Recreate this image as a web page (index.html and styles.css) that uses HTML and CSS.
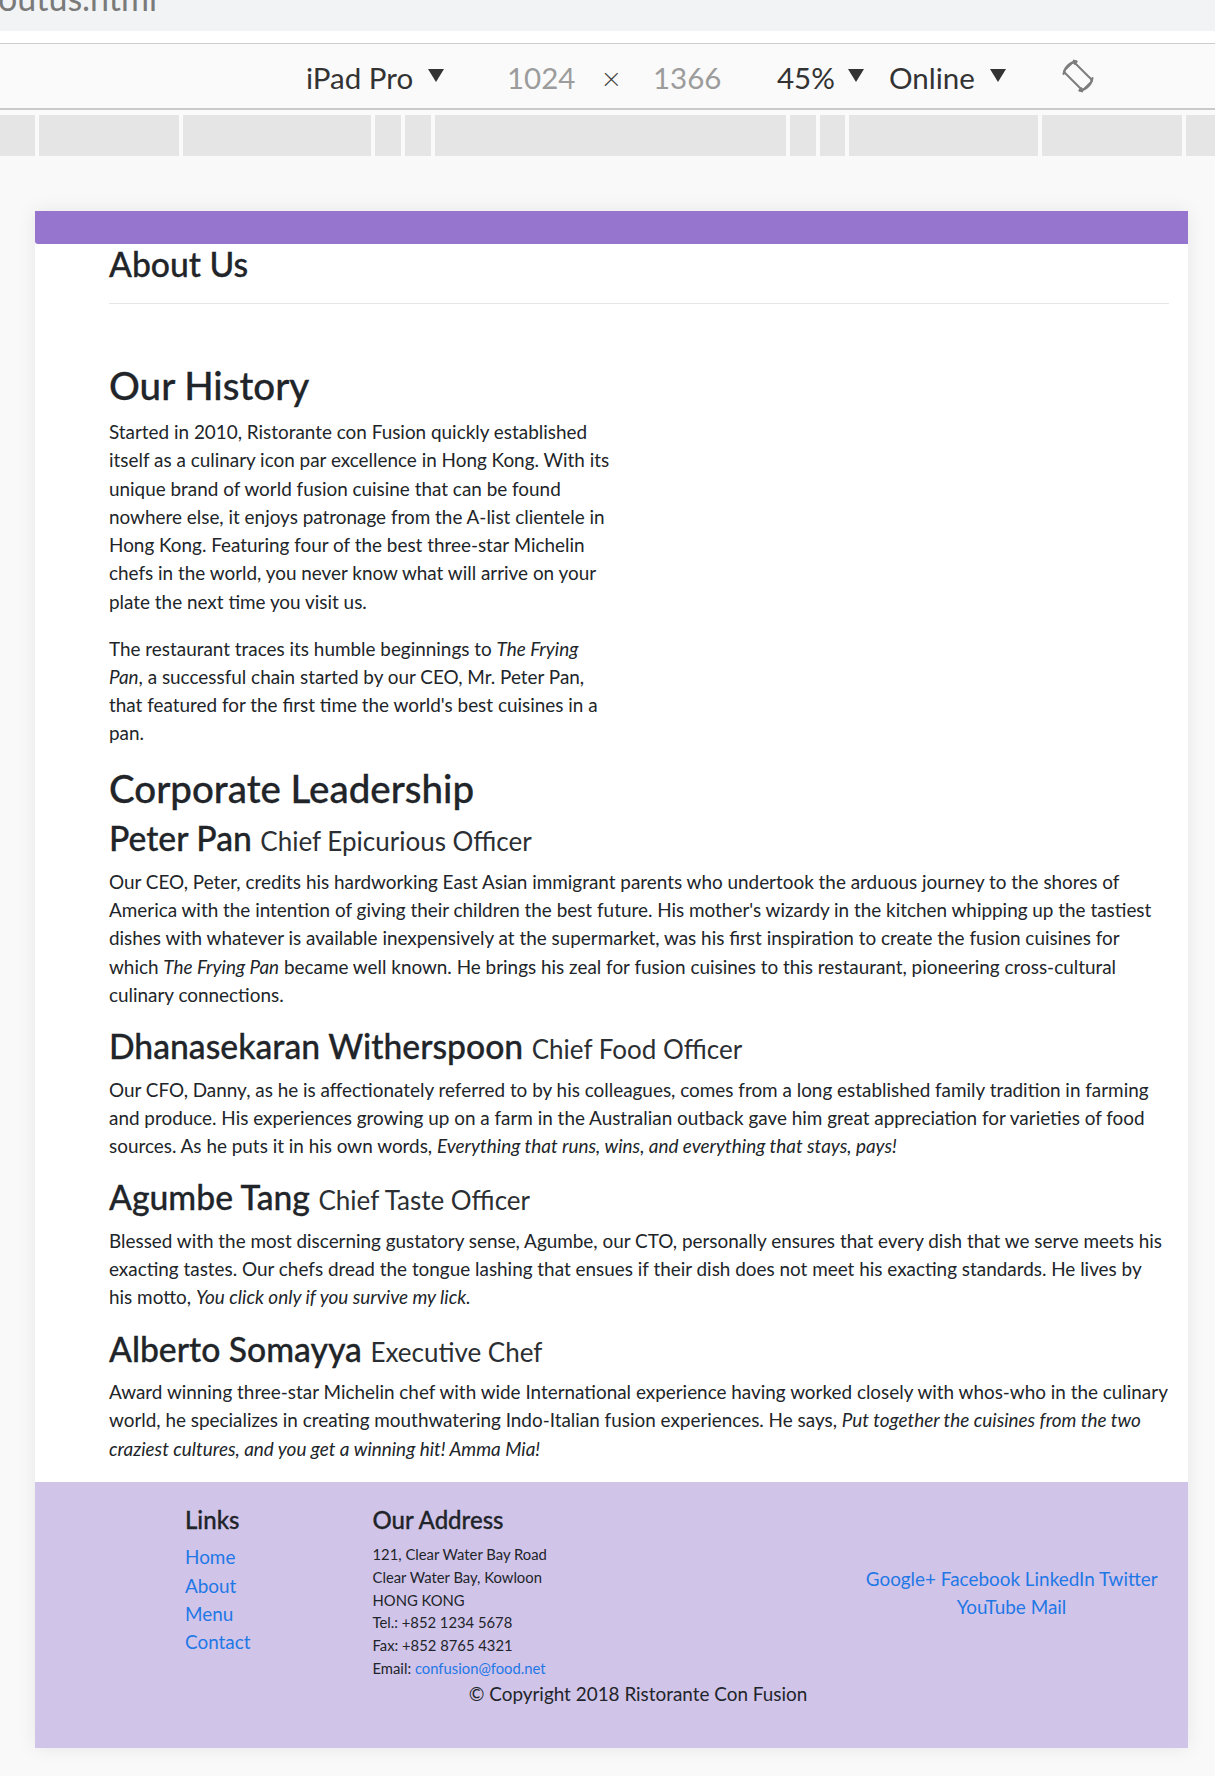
FILE: index.html
```html
<!DOCTYPE html>
<html lang="en">
<head>
<meta charset="utf-8">
<title>About Us</title>
<link rel="stylesheet" href="styles.css">
</head>
<body>
<div class="tabbar"><div class="tab-title">outus.html</div></div>
<div class="tab-gap"></div>
<div class="toolbar">
  <span class="tb-spacer"></span>
  <span class="tb-text">iPad Pro</span>
  <span class="tb-tri"></span>
  <span class="tb-dim">1024</span>
  <span class="tb-x">×</span>
  <span class="tb-dim">1366</span>
  <span class="tb-text">45%</span>
  <span class="tb-tri"></span>
  <span class="tb-text">Online</span>
  <span class="tb-tri"></span>
  <span class="tb-icon">
    <svg width="36" height="34" viewBox="0 0 36 34" fill="none" stroke="#7d7d7d" stroke-width="2" stroke-linecap="round" stroke-linejoin="round">
      <rect x="11" y="3.5" width="14" height="27" rx="2.5" transform="rotate(-45 18 17)"/>
      <path d="M3.5 15 A14.5 14.5 0 0 1 16.5 2.5"/>
      <path d="M13.8 1.6 L16.5 2.5 L14.6 4.8"/>
      <path d="M32.5 19 A14.5 14.5 0 0 1 19.5 31.5"/>
      <path d="M22.2 32.4 L19.5 31.5 L21.4 29.2"/>
    </svg>
  </span>
</div>
<div class="ruler-gap"></div>
<div class="ruler">
  <span></span><span></span><span></span><span></span><span></span><span></span><span></span><span></span><span></span><span></span><span></span>
</div>

<div class="stage">
  <div class="device">
    <div class="device-top"></div>
    <div class="content">
      <h3 class="page-title">About Us</h3>
      <div class="rule"></div>

      <div class="history">
        <h2 class="section-title">Our History</h2>
        <p>Started in 2010, Ristorante con Fusion quickly established itself as a culinary icon par excellence in Hong Kong. With its unique brand of world fusion cuisine that can be found nowhere else, it enjoys patronage from the A-list clientele in Hong Kong. Featuring four of the best three-star Michelin chefs in the world, you never know what will arrive on your plate the next time you visit us.</p>
        <p>The restaurant traces its humble beginnings to <em>The Frying Pan</em>, a successful chain started by our CEO, Mr. Peter Pan, that featured for the first time the world's best cuisines in a pan.</p>
      </div>

      <div class="leaders">
        <h2 class="section-title lead-title">Corporate Leadership</h2>
        <div class="leader">
          <h3 class="leader-name">Peter Pan <small>Chief Epicurious Officer</small></h3>
          <p>Our CEO, Peter, credits his hardworking East Asian immigrant parents who undertook the arduous journey to the shores of America with the intention of giving their children the best future. His mother's wizardy in the kitchen whipping up the tastiest dishes with whatever is available inexpensively at the supermarket, was his first inspiration to create the fusion cuisines for which <em>The Frying Pan</em> became well known. He brings his zeal for fusion cuisines to this restaurant, pioneering cross-cultural culinary connections.</p>
        </div>
        <div class="leader">
          <h3 class="leader-name">Dhanasekaran Witherspoon <small>Chief Food Officer</small></h3>
          <p>Our CFO, Danny, as he is affectionately referred to by his colleagues, comes from a long established family tradition in farming and produce. His experiences growing up on a farm in the Australian outback gave him great appreciation for varieties of food sources. As he puts it in his own words, <em>Everything that runs, wins, and everything that stays, pays!</em></p>
        </div>
        <div class="leader">
          <h3 class="leader-name">Agumbe Tang <small>Chief Taste Officer</small></h3>
          <p>Blessed with the most discerning gustatory sense, Agumbe, our CTO, personally ensures that every dish that we serve meets his exacting tastes. Our chefs dread the tongue lashing that ensues if their dish does not meet his exacting standards. He lives by his motto, <em>You click only if you survive my lick.</em></p>
        </div>
        <div class="leader">
          <h3 class="leader-name">Alberto Somayya <small>Executive Chef</small></h3>
          <p>Award winning three-star Michelin chef with wide International experience having worked closely with whos-who in the culinary world, he specializes in creating mouthwatering Indo-Italian fusion experiences. He says, <em>Put together the cuisines from the two craziest cultures, and you get a winning hit! Amma Mia!</em></p>
        </div>
      </div>
    </div>

    <footer class="footer">
      <div class="footer-grid">
        <div class="col-links">
          <h5 class="footer-title">Links</h5>
          <ul class="link-list">
            <li><a href="#">Home</a></li>
            <li><a href="#">About</a></li>
            <li><a href="#">Menu</a></li>
            <li><a href="#">Contact</a></li>
          </ul>
        </div>
        <div class="col-address">
          <h5 class="footer-title">Our Address</h5>
          <address>
            121, Clear Water Bay Road<br>
            Clear Water Bay, Kowloon<br>
            HONG KONG<br>
            Tel.: +852 1234 5678<br>
            Fax: +852 8765 4321<br>
            Email: <a href="#">confusion@food.net</a>
          </address>
        </div>
        <div class="col-social">
          <a href="#">Google+</a> <a href="#">Facebook</a> <a href="#">LinkedIn</a> <a href="#">Twitter</a> <a href="#">YouTube</a> <a href="#">Mail</a>
        </div>
      </div>
      <p class="copyright">© Copyright 2018 Ristorante Con Fusion</p>
    </footer>
  </div>
</div>
</body>
</html>
```

FILE: styles.css
```css
* { box-sizing: border-box; }
html, body { margin: 0; padding: 0; }
body {
  width: 1215px;
  height: 1776px;
  overflow: hidden;
  background: #f9f9f9;
  font-family: Lato, "Open Sans", sans-serif;
  color: #212529;
}

/* browser chrome */
.tabbar { height: 31px; background: #f1f3f4; overflow: hidden; }
.tab-title { margin: -19px 0 0 -2px; font-size: 34px; line-height: 33px; color: #7a7a7a; }
.tab-gap { height: 12px; background: #fff; }

.toolbar {
  height: 67px;
  border-top: 1px solid #cdcdcd;
  border-bottom: 2px solid #cacaca;
  background: #fafafa;
  display: grid;
  grid-template-columns: 306px 122px 79px 95px 51px 124px 71px 41px 101px 70px 36px;
  align-items: start;
  padding-top: 16px;
}
.tb-text, .tb-dim, .tb-x { font-size: 29.5px; line-height: 36px; color: #333; white-space: nowrap; }
.tb-dim { color: #9c9c9c; }
.tb-x { font-size: 32px; font-weight: 300; color: #444; }
.tb-tri {
  width: 0; height: 0;
  margin-top: 9px;
  border-left: 8px solid transparent;
  border-right: 8px solid transparent;
  border-top: 13px solid #333;
}
.tb-icon { margin-top: -1px; display: block; }
.tb-icon svg { display: block; }

.ruler-gap { height: 5px; background: #fafafa; }
.ruler {
  height: 41px;
  background: #fafafa;
  display: grid;
  grid-template-columns: 35px 140px 188px 25.5px 26.5px 351px 25.5px 25.5px 189px 140px 29px;
  column-gap: 4px;
}
.ruler span { background: #e5e5e5; }

/* emulated device */
.stage { padding: 55px 27px 0 35px; }
.device {
  width: 1153px;
  background: #fff;
  box-shadow: 0 0 18px rgba(0, 0, 0, 0.08);
}
.device-top { height: 33px; background: #9575cd; border-radius: 0 0 0 3px; }

.content { padding: 0 19px 0 74px; }

h2, h3, h5 { font-weight: 500; -webkit-text-stroke: 0.3px currentColor; }

.page-title {
  margin: 2.4px 0 0;
  font-size: 33.7px;
  line-height: 37.5px;
}
.rule { height: 1px; background: #e6e6e6; margin-top: 18.9px; }

.history { width: 504px; padding-top: 58.6px; }
.section-title {
  margin: 0 0 9.4px;
  font-size: 38.5px;
  line-height: 46.2px;
}
p { margin: 0 0 18.5px; font-size: 18.9px; line-height: 28.3px; }

.leaders { margin-top: -1.5px; }
.lead-title { margin-bottom: 9.3px; }
.leader + .leader { padding-top: 0.4px; }
.leader-name {
  margin: 0 0 10px;
  font-size: 33.7px;
  line-height: 37.5px;
}
.leader-name small {
  font-size: 26px;
  line-height: 1;
  font-weight: 400;
  color: #2b2f33;
  -webkit-text-stroke: 0;
}

/* footer */
.footer { background: #d1c4e9; padding: 24.8px 21px 39.8px 74px; }
.footer-grid { display: grid; grid-template-columns: 76px 187.5px 474px 330px; }
.col-links { grid-column: 2; }
.footer-title {
  margin: 0 0 10px;
  font-size: 24px;
  line-height: 27px;
}
.link-list { list-style: none; margin: 0; padding: 0; font-size: 18.9px; line-height: 28.3px; }
a { color: #1f78e5; text-decoration: none; }
address { font-style: normal; font-size: 14.8px; line-height: 22.7px; margin: 0; }
.col-social { align-self: center; text-align: center; font-size: 18.9px; line-height: 28.3px; }
.copyright { margin: 0; text-align: center; }
```
